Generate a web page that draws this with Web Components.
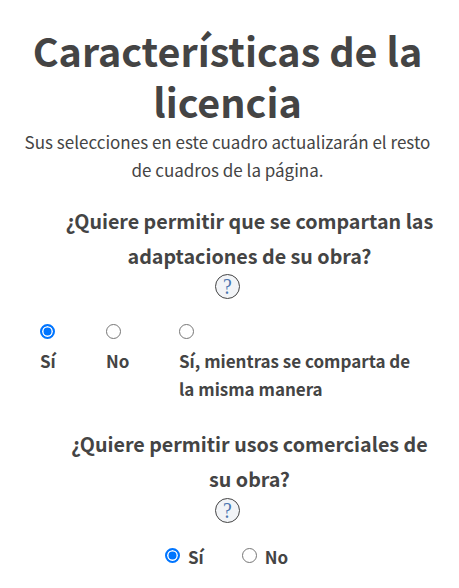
<!DOCTYPE html>
<html lang="es">
<head>
<meta charset="utf-8">
<title>Características de la licencia</title>
<style>
  html, body { margin: 0; padding: 0; background: #fff; }
  body {
    font-family: "Noto Sans CJK JP", "Noto Sans", sans-serif;
    color: #444;
  }
</style>
</head>
<body>
<license-panel>
  <license-question label="¿Quiere permitir que se compartan las adaptaciones de su obra?" layout="stacked">
    <license-option checked style="width:66px">Sí</license-option>
    <license-option style="width:73px">No</license-option>
    <license-option style="width:240px">Sí, mientras se comparta de la misma manera</license-option>
  </license-question>
  <license-question label="¿Quiere permitir usos comerciales de su obra?" layout="inline">
    <license-option checked>Sí</license-option>
    <license-option>No</license-option>
  </license-question>
</license-panel>

<script>
class LicensePanel extends HTMLElement {
  constructor() {
    super();
    this.attachShadow({mode: "open"});
    this.shadowRoot.innerHTML = `
      <style>
        :host { display: block; width: 459px; padding: 24px 0 0; box-sizing: border-box; }
        h1 {
          margin: 0;
          padding-right: 4px;
          font-size: 39.5px;
          line-height: 51px;
          font-weight: 700;
          text-align: center;
          color: #444;
        }
        p {
          margin: 2px 0 0;
          padding: 0 22px 0 18px;
          font-size: 17px;
          line-height: 28px;
          text-align: center;
          color: #444;
        }
      </style>
      <h1>Características de la licencia</h1>
      <p>Sus selecciones en este cuadro actualizarán el resto de cuadros de la página.</p>
      <slot></slot>
    `;
  }
}

class LicenseQuestion extends HTMLElement {
  constructor() {
    super();
    this.attachShadow({mode: "open"});
  }

  connectedCallback() {
    const inline = this.getAttribute("layout") === "inline";
    this.shadowRoot.innerHTML = `
      <style>
        :host { display: block; }
        h2 {
          margin: 0;
          padding: 0 20px 0 60px;
          font-size: 19.7px;
          line-height: 35px;
          font-weight: 700;
          text-align: center;
          color: #444;
        }
        .help { display: flex; justify-content: center; height: 27px; padding-right: 5px; }
        .options { display: flex; }
        .stacked { padding: 23px 0 0 40px; }
        .inline { justify-content: center; padding: 17.5px 6px 0 0; gap: 38px; }
        .top-stacked .help { margin-top: 1px; }
        .top-inline .help { margin-top: 2px; }
      </style>
      <div class="top-${inline ? "inline" : "stacked"}">
        <h2>${this.getAttribute("label")}</h2>
        <div class="help"><help-button></help-button></div>
        <div class="options ${inline ? "inline" : "stacked"}"><slot></slot></div>
      </div>
    `;
    this.style.paddingTop = inline ? "23px" : "19px";
    this.querySelectorAll("license-option").forEach(o => {
      if (inline) o.setAttribute("inline", "");
    });
  }
}

class HelpButton extends HTMLElement {
  constructor() {
    super();
    this.attachShadow({mode: "open"});
    this.shadowRoot.innerHTML = `
      <style>
        :host {
          display: flex;
          align-items: center;
          justify-content: center;
          box-sizing: border-box;
          width: 25px;
          height: 25px;
          border: 1px solid #444;
          border-radius: 50%;
          background: #f2f4f7;
          font: 24px/23px "Liberation Serif", serif;
          color: #4a76b0;
        }
        span { display: block; transform: scaleX(.82); }
      </style>
      <span>?</span>
    `;
  }
}

class LicenseOption extends HTMLElement {
  constructor() {
    super();
    this.attachShadow({mode: "open"});
  }

  connectedCallback() {
    const checked = this.hasAttribute("checked");
    this.shadowRoot.innerHTML = `
      <style>
        :host { display: block; box-sizing: border-box; }
        :host([inline]) { display: flex; align-items: flex-start; gap: 8px; }
        .radio {
          display: block;
          box-sizing: border-box;
          width: 15px;
          height: 15px;
          border-radius: 50%;
          border: 1px solid #767676;
          background: #fff;
        }
        :host([inline]) .radio { margin-top: 5px; }
        .radio.on {
          border: 2px solid #0075ff;
          box-shadow: inset 0 0 0 1.5px #fff;
          background: #0075ff;
        }
        label {
          display: block;
          margin-top: 8px;
          font-size: 17px;
          line-height: 28px;
          font-weight: 700;
          color: #444;
        }
        :host([inline]) label { margin-top: 0; }
      </style>
      <span class="radio ${checked ? "on" : ""}"></span>
      <label><slot></slot></label>
    `;
  }
}

customElements.define("license-panel", LicensePanel);
customElements.define("license-question", LicenseQuestion);
customElements.define("help-button", HelpButton);
customElements.define("license-option", LicenseOption);
</script>
</body>
</html>
